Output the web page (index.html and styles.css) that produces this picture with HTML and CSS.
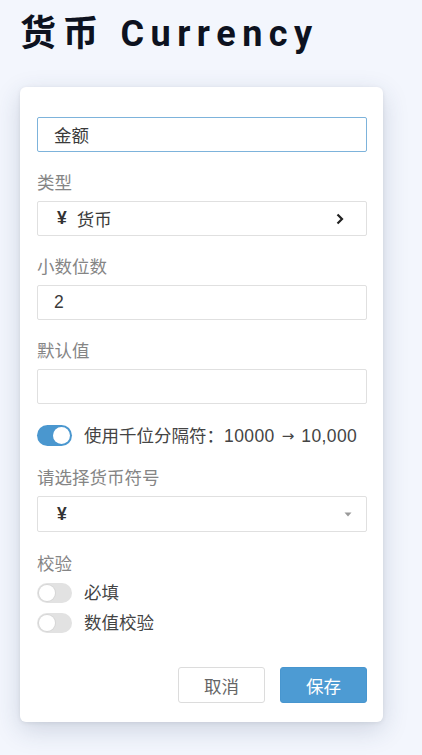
FILE: index.html
```html
<!DOCTYPE html>
<html lang="zh">
<head>
<meta charset="utf-8">
<link rel="stylesheet" href="styles.css">
</head>
<body>
<div class="page">
  <h1 class="title">货币 Currency</h1>
  <div class="card">
    <div class="input focused">金额</div>

    <div class="field">
      <div class="label">类型</div>
      <div class="input select-link">
        <span class="type"><span class="yen">¥</span><span>货币</span></span>
        <svg class="chev" width="8" height="12" viewBox="0 0 8 12"><path d="M1.5 1.5 L6 6 L1.5 10.5" fill="none" stroke="#222" stroke-width="2.2"/></svg>
      </div>
    </div>

    <div class="field">
      <div class="label">小数位数</div>
      <div class="input">2</div>
    </div>

    <div class="field">
      <div class="label">默认值</div>
      <div class="input"></div>
    </div>

    <div class="toggle-row first">
      <span class="toggle on"><span class="knob"></span></span>
      <span class="toggle-text">使用千位分隔符：<span class="num">10000</span><span class="arrow">→</span><span class="num">10,000</span></span>
    </div>

    <div class="field sym">
      <div class="label">请选择货币符号</div>
      <div class="input select-drop">
        <span class="yen">¥</span>
        <svg class="caret" width="8" height="5" viewBox="0 0 8 5"><path d="M0.5 0.5 L7.5 0.5 L4 4.5 Z" fill="#999"/></svg>
      </div>
    </div>

    <div class="field check">
      <div class="label">校验</div>
      <div class="toggle-list">
        <div class="toggle-row">
          <span class="toggle off"><span class="knob"></span></span>
          <span class="toggle-text">必填</span>
        </div>
        <div class="toggle-row">
          <span class="toggle off"><span class="knob"></span></span>
          <span class="toggle-text">数值校验</span>
        </div>
      </div>
    </div>

    <div class="actions">
      <button class="btn cancel">取消</button>
      <button class="btn save">保存</button>
    </div>
  </div>
</div>
</body>
</html>
```

FILE: styles.css
```css
* { box-sizing: border-box; }
html, body { margin: 0; padding: 0; }
body {
  background: #f3f6fd;
  width: 422px;
  height: 755px;
  overflow: hidden;
  font-family: "Liberation Sans", "Noto Sans CJK SC", sans-serif;
}
.page { padding: 12px 20px 0 20px; }
.title {
  margin: 0;
  font-family: Roboto, "Noto Sans CJK SC", sans-serif;
  font-weight: 700;
  font-size: 36px;
  line-height: 44px;
  letter-spacing: 6.5px;
  color: #0d1220;
}
.card {
  margin-top: 31px;
  width: 363px;
  background: #fff;
  border-radius: 6px;
  box-shadow: 0 8px 26px rgba(40, 60, 100, 0.18), 0 1px 4px rgba(0,0,0,0.08);
  padding: 30px 16px 19px 17px;
}
.input {
  height: 35px;
  border: 1px solid #e0e0e0;
  border-radius: 2px;
  padding: 0 16px;
  display: flex;
  align-items: center;
  font-size: 17.5px;
  color: #3a3a3a;
}
.input.focused {
  border-color: #7db3db;
}
.field { margin-top: 21px; }
.label {
  font-size: 17.5px;
  line-height: 20px;
  color: #858585;
  margin-bottom: 8px;
}
.select-link { justify-content: space-between; padding-left: 19px; padding-right: 22px; }
.type { display: flex; align-items: center; gap: 10px; }
.select-drop { justify-content: space-between; padding-left: 19px; padding-right: 14px; }
.yen { font-weight: 700; color: #333; }
.toggle-row {
  display: flex;
  align-items: center;
  gap: 12px;
}
.toggle-row.first { margin-top: 21px; }
.field.sym { margin-top: 22px; }
.field.sym .input { height: 36px; }
.field.check { margin-top: 22px; }
.field.check .label { margin-bottom: 9px; }
.toggle-list { display: flex; flex-direction: column; gap: 10px; }
.toggle {
  width: 35px;
  height: 20px;
  border-radius: 10px;
  display: flex;
  align-items: center;
  padding: 0 2px;
  flex: none;
}
.toggle.on { background: #4a97cf; height: 21px; border-radius: 11px; justify-content: flex-end; }
.toggle.off { background: #e2e2e2; justify-content: flex-start; }
.knob {
  width: 16px;
  height: 16px;
  border-radius: 50%;
  background: #fff;
}
.toggle.on .knob { width: 17px; height: 17px; }
.toggle.off .knob { box-shadow: 0 0 0 1px #d6d6d6; }
.toggle-text { font-size: 17.5px; color: #444; line-height: 20px; height: 20px; display: flex; align-items: center; white-space: nowrap; }
.num { letter-spacing: 0.4px; line-height: 20px; }
.arrow { font-family: "DejaVu Sans", sans-serif; font-size: 15px; line-height: 20px; margin: 0 7px 0 7px; }
.actions {
  margin-top: 34px;
  display: flex;
  justify-content: flex-end;
  gap: 15px;
}
.btn {
  width: 87px;
  height: 36px;
  border-radius: 3px;
  font-family: "Liberation Sans", "Noto Sans CJK SC", sans-serif;
  font-size: 17.5px;
  cursor: pointer;
}
.btn.cancel { background: #fff; border: 1px solid #dcdcdc; color: #666; }
.btn.save { background: #4d9bd3; border: 1px solid #4896cf; color: #fff; }
```
